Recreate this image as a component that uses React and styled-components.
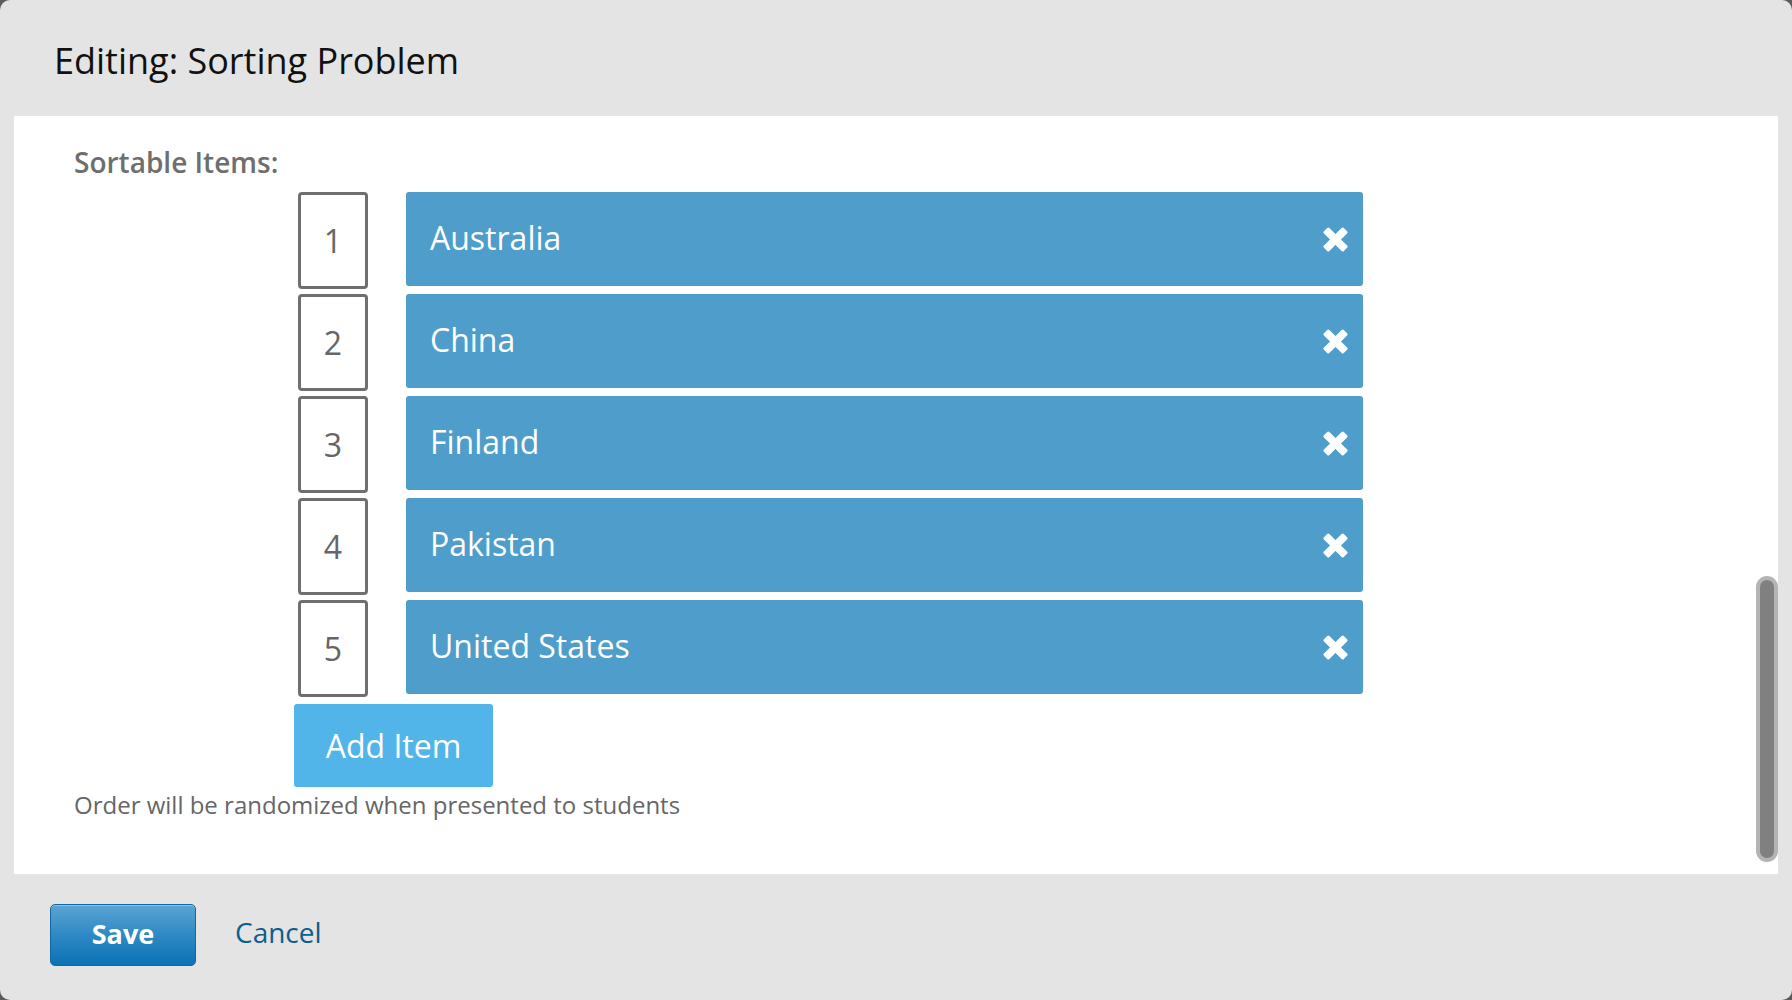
import React from "react"
import styled, { createGlobalStyle } from "styled-components"

const items = ["Australia", "China", "Finland", "Pakistan", "United States"]

const GlobalStyle = createGlobalStyle`
  html, body {
    margin: 0;
    padding: 0;
    background: #5c5c5c;
    font-family: "Open Sans", "Noto Sans", sans-serif;
  }
`

const CrossIcon = () => (
  <svg width="25" height="25" viewBox="0 0 24 24">
    <g fill="#fff">
      <rect x="8.3" y="-1.5" width="7.4" height="27" rx="1.5" transform="rotate(45 12 12)" />
      <rect x="8.3" y="-1.5" width="7.4" height="27" rx="1.5" transform="rotate(-45 12 12)" />
    </g>
  </svg>
)

const App = () => {
  return (
    <>
      <GlobalStyle />
      <Modal>
        <Header>
          <Title>Editing: Sorting Problem</Title>
        </Header>
        <Body>
          <Label>Sortable Items:</Label>
          <List>
            {items.map((name, i) => (
              <Row key={name}>
                <NumberBox>{i + 1}</NumberBox>
                <Item>
                  <ItemName>{name}</ItemName>
                  <RemoveButton aria-label="remove">
                    <CrossIcon />
                  </RemoveButton>
                </Item>
              </Row>
            ))}
          </List>
          <AddButton>Add Item</AddButton>
          <Hint>Order will be randomized when presented to students</Hint>
          <ScrollThumb />
        </Body>
        <Footer>
          <SaveButton>Save</SaveButton>
          <CancelLink>Cancel</CancelLink>
        </Footer>
      </Modal>
    </>
  )
}

export default App

const Modal = styled.div`
  height: 1000px;
  background: #e4e4e4;
  border-radius: 10px;
  display: flex;
  flex-direction: column;
  overflow: hidden;
`

const Header = styled.div`
  height: 116px;
  box-sizing: border-box;
  padding: 43px 0 0 54px;
`

const Title = styled.h1`
  margin: 0;
  font-size: 36px;
  line-height: 36px;
  font-weight: 400;
  color: #111;
`

const Body = styled.div`
  position: relative;
  margin: 0 14px;
  height: 758px;
  box-sizing: border-box;
  background: #fff;
  padding: 32px 0 0 60px;
`

const Label = styled.div`
  font-size: 28px;
  line-height: 28px;
  font-weight: 600;
  color: #6e6e6e;
  margin-bottom: 16px;
`

const List = styled.div`
  display: flex;
  flex-direction: column;
  gap: 5px;
  margin-left: 224px;
`

const Row = styled.div`
  display: flex;
  align-items: flex-start;
  gap: 38px;
`

const NumberBox = styled.div`
  width: 70px;
  height: 97px;
  box-sizing: border-box;
  border: 3px solid #6f6f6f;
  border-radius: 4px;
  display: flex;
  align-items: center;
  justify-content: center;
  font-size: 32px;
  color: #666;
`

const Item = styled.div`
  width: 957px;
  height: 94px;
  box-sizing: border-box;
  background: #4e9dca;
  border-radius: 3px;
  display: flex;
  align-items: center;
  justify-content: space-between;
  padding: 0 15px 0 24px;
`

const ItemName = styled.span`
  font-size: 32px;
  color: #fff;
  padding-bottom: 4px;
`

const RemoveButton = styled.span`
  display: flex;
  width: 25px;
  height: 25px;
`

const AddButton = styled.button`
  margin: 7px 0 0 220px;
  width: 199px;
  height: 83px;
  border: none;
  border-radius: 3px;
  background: #52b5ea;
  color: #fff;
  font-family: "Open Sans", sans-serif;
  font-size: 32px;
  padding: 0;
  display: block;
`

const Hint = styled.div`
  margin-top: 6px;
  font-size: 24px;
  line-height: 24px;
  color: #666;
`

const ScrollThumb = styled.div`
  position: absolute;
  right: 0;
  top: 460px;
  width: 22px;
  height: 286px;
  box-sizing: border-box;
  border-radius: 11px;
  background: #808080;
  border: 4px solid #b4b4b4;
`

const Footer = styled.div`
  flex: 1;
  display: flex;
  align-items: flex-start;
  padding: 30px 0 0 50px;
  gap: 39px;
`

const SaveButton = styled.button`
  width: 146px;
  height: 62px;
  border: 1px solid #1267a0;
  border-radius: 5px;
  background: linear-gradient(to bottom, #5ba4d3 0%, #2f89c4 50%, #0a72b5 100%);
  box-shadow: inset 0 1px 0 rgba(255, 255, 255, 0.35);
  color: #fff;
  font-family: "Open Sans", sans-serif;
  font-weight: 700;
  font-size: 27px;
  padding: 0 0 4px;
`

const CancelLink = styled.a`
  font-size: 28px;
  line-height: 56px;
  color: #0b5f8f;
  cursor: pointer;
`
